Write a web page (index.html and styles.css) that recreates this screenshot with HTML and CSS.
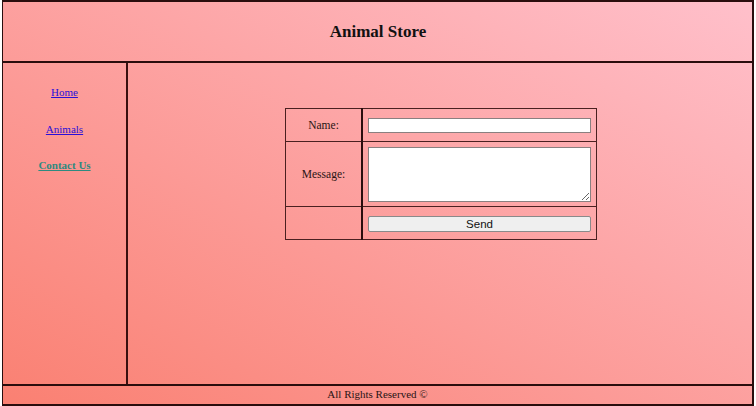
FILE: index.html
```html
<!DOCTYPE html>
<html>
<head>
<meta charset="utf-8">
<title>Animal Store</title>
<link rel="stylesheet" href="styles.css">
</head>
<body>
<div class="page">
  <header class="header"><h1 class="title">Animal Store</h1></header>
  <nav class="sidebar">
    <a class="nav-link" href="#">Home</a>
    <a class="nav-link" href="#">Animals</a>
    <a class="nav-link active" href="#">Contact Us</a>
  </nav>
  <main class="main">
    <form class="contact">
      <table class="form-table">
        <tr class="row-name">
          <td class="label">Name:</td>
          <td class="field"><input class="text-input" type="text"></td>
        </tr>
        <tr class="row-msg">
          <td class="label">Message:</td>
          <td class="field"><textarea class="text-area"></textarea></td>
        </tr>
        <tr class="row-send">
          <td class="label"></td>
          <td class="field"><button class="send" type="button">Send</button></td>
        </tr>
      </table>
    </form>
  </main>
  <footer class="footer">All Rights Reserved ©</footer>
</div>
</body>
</html>
```
FILE: styles.css
```css
html, body {
  margin: 0;
  padding: 0;
  background: #fff;
}
body {
  font-family: "Liberation Serif", "Times New Roman", serif;
  color: #2a1414;
}
.page {
  box-sizing: border-box;
  margin-left: 2px;
  width: 752px;
  height: 406px;
  border: 2px solid #2a0d0d;
  border-left-width: 1px;
  background: linear-gradient(to top right, #fa8072, #ffc0cb);
  display: grid;
  grid-template-columns: 125px 1fr;
  grid-template-rows: 61px 1fr 20px;
}
.header {
  grid-column: 1 / 3;
  border-bottom: 2px solid #2a0d0d;
  display: flex;
  align-items: center;
  justify-content: center;
}
.title {
  margin: 0;
  font-size: 17px;
  font-weight: bold;
  color: #111;
  padding-left: 1px;
}
.sidebar {
  border-right: 2px solid #3a0f0f;
  display: flex;
  flex-direction: column;
  align-items: center;
  padding-top: 23px;
  gap: 23.5px;
  font-size: 11px;
}
.nav-link {
  color: #2a10d8;
  line-height: 13px;
}
.nav-link.active {
  color: #2e8a80;
  font-weight: bold;
}
.main {
  display: flex;
  justify-content: center;
  align-items: flex-start;
  padding-top: 45px;
  padding-left: 2px;
}
.contact {
  margin: 0;
}
.form-table {
  border-collapse: collapse;
  width: 312px;
  font-size: 11.5px;
}
.form-table td {
  border: 1px solid #4a2020;
  padding: 0;
}
.label {
  width: 77px;
  text-align: center;
  border-right: 2px solid #2a0d0d !important;
  color: #2a1414;
}
.field {
  padding: 0 5px 0 5px !important;
}
.row-name td { height: 32px; }
.row-msg td { height: 64px; }
.row-send td { height: 32px; }
.text-input {
  display: block;
  box-sizing: border-box;
  width: 223px;
  height: 15px;
  margin: 1px 0 0 0;
  border: 1px solid #8a8080;
  background: #fff;
  padding: 0 2px;
}
.text-area {
  display: block;
  box-sizing: border-box;
  width: 223px;
  height: 55px;
  margin: 0;
  border: 1px solid #8a8080;
  background: #fff;
  padding: 2px;
}
.send {
  display: block;
  box-sizing: border-box;
  width: 223px;
  height: 16px;
  margin: 1px 0 0 0;
  padding: 0;
  border: 1px solid #8a8a8a;
  border-radius: 2px;
  background: #efefef;
  font-family: "Liberation Sans", Arial, sans-serif;
  font-size: 11.5px;
  line-height: 14px;
  color: #111;
}
.footer {
  grid-column: 1 / 3;
  border-top: 2px solid #2a0d0d;
  text-align: center;
  font-size: 11px;
  line-height: 17px;
  color: #2a1414;
}
```
